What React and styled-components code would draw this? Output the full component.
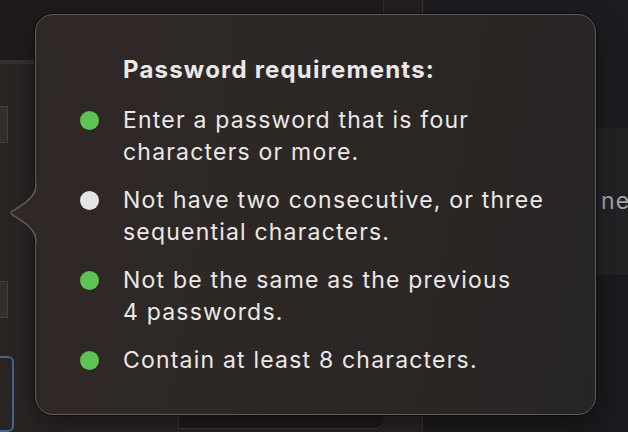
import styled, { createGlobalStyle } from "styled-components";

const GlobalStyle = createGlobalStyle`
  html, body {
    margin: 0;
    padding: 0;
    background: #1c1c20;
    font-family: Inter, "Noto Sans", sans-serif;
    -webkit-font-smoothing: antialiased;
  }
`;

const rules = [
  { ok: true, lines: ["Enter a password that is four", "characters or more."] },
  { ok: false, lines: ["Not have two consecutive, or three", "sequential characters."] },
  { ok: true, lines: ["Not be the same as the previous", "4 passwords."] },
  { ok: true, lines: ["Contain at least 8 characters."] },
];

export default function App() {
  return (
    <>
      <GlobalStyle />
      <Screen>
        <Window>
          <TopBar>
            <TopSection />
            <TopSection $last />
          </TopBar>
          <Body>
            <Rail>
              <Field $top={42} />
              <Field $top={138} />
              <BlueField />
            </Rail>
            <Main>
              <BottomPanel />
            </Main>
          </Body>
        </Window>
        <Side>
          <SideTop />
          <SideRow>ne</SideRow>
        </Side>

        <Popover>
          <Arrow width="30" height="60" viewBox="0 0 30 60">
            <path
              d="M28 0 C28 10 24 14 17 20 L4 28.5 Q2 30 4 31.5 L17 40 C24 46 28 50 28 60 Z"
              fill="#2f2826"
            />
            <path
              d="M27 0 C27 10 23 14 16 20 L3 28.5 Q1 30 3 31.5 L16 40 C23 46 27 50 27 60"
              fill="none"
              stroke="#605c5a"
              strokeWidth="1.5"
            />
          </Arrow>
          <Title>Password requirements:</Title>
          <List>
            {rules.map((r, i) => (
              <Item key={i}>
                <Dot $ok={r.ok} />
                <span>
                  {r.lines.map((l, j) => (
                    <span key={j}>
                      {l}
                      {j < r.lines.length - 1 && <br />}
                    </span>
                  ))}
                </span>
              </Item>
            ))}
          </List>
        </Popover>
      </Screen>
    </>
  );
}

const Screen = styled.div`
  position: relative;
  width: 628px;
  height: 432px;
  overflow: hidden;
  display: grid;
  grid-template-columns: 423px 1fr;
`;

const Window = styled.div`
  display: flex;
  flex-direction: column;
  background: #231e1d;
  border-right: 1px solid #3a3534;
`;

const TopBar = styled.div`
  height: 60px;
  display: flex;
  background: #201b1a;
  border-bottom: 4px solid #35302f;
`;

const TopSection = styled.div`
  flex: ${(p) => (p.$last ? 1 : "0 0 383px")};
  border-right: ${(p) => (p.$last ? "none" : "1px solid #332d2c")};
  background: ${(p) => (p.$last ? "#241f1e" : "transparent")};
`;

const Body = styled.div`
  flex: 1;
  display: flex;
`;

const Rail = styled.div`
  width: 24px;
  display: flex;
  flex-direction: column;
  background: #2a2423;
`;

const Field = styled.div`
  margin-top: ${(p) => p.$top}px;
  width: 7px;
  height: 35px;
  background: #35302e;
  border: 1px solid #45403e;
  border-left: none;
`;

const BlueField = styled.div`
  margin-top: 38px;
  margin-left: -8px;
  width: 18px;
  flex: 1;
  border: 2px solid #3e6794;
  border-radius: 6px;
  background: #2a2423;
`;

const Main = styled.div`
  flex: 1;
  display: flex;
  flex-direction: column;
  justify-content: flex-end;
  background: #2a2423;
`;

const BottomPanel = styled.div`
  height: 60px;
  margin-left: 154px;
  margin-right: 39px;
  margin-bottom: 3px;
  background: #1f1a19;
  border-left: 1px solid #3d3837;
  border-bottom: 1px solid #3d3837;
  border-bottom-right-radius: 8px;
`;

const Side = styled.div`
  display: flex;
  flex-direction: column;
  background: #1b1b1f;
`;

const SideTop = styled.div`
  height: 128px;
  background: #1d1d21;
`;

const SideRow = styled.div`
  height: 147px;
  background: #232326;
  color: #a8a8aa;
  font-size: 23px;
  letter-spacing: 1.2px;
  line-height: 147px;
  padding-left: 178px;
  box-sizing: border-box;
`;

const Popover = styled.div`
  position: absolute;
  left: 35px;
  top: 14px;
  width: 561px;
  height: 401px;
  box-sizing: border-box;
  padding: 39px 20px 38px 44px;
  border-radius: 18px;
  background: linear-gradient(100deg, #2f2826 0%, #2c2725 55%, #272524 100%);
  border: 1px solid #605c5a;
  box-shadow: 0 0 0 1px #0e0c0c, 0 10px 30px rgba(0, 0, 0, 0.4);
  color: #ebe9e8;
  font-size: 23px;
  letter-spacing: 1.2px;
  line-height: 32px;
`;

const Arrow = styled.svg`
  position: absolute;
  left: -27px;
  top: 168px;
  display: block;
`;

const Title = styled.div`
  margin-left: 43px;
  margin-bottom: 18px;
  font-size: 24px;
  font-weight: 700;
  white-space: nowrap;
`;

const List = styled.div`
  display: flex;
  flex-direction: column;
  gap: 16px;
`;

const Item = styled.div`
  display: grid;
  grid-template-columns: 20px 1fr;
  column-gap: 23px;
  white-space: nowrap;
`;

const Dot = styled.span`
  width: 19px;
  height: 19px;
  margin-top: 7px;
  border-radius: 50%;
  background: ${(p) => (p.$ok ? "#5bc552" : "#e5e4e4")};
`;
